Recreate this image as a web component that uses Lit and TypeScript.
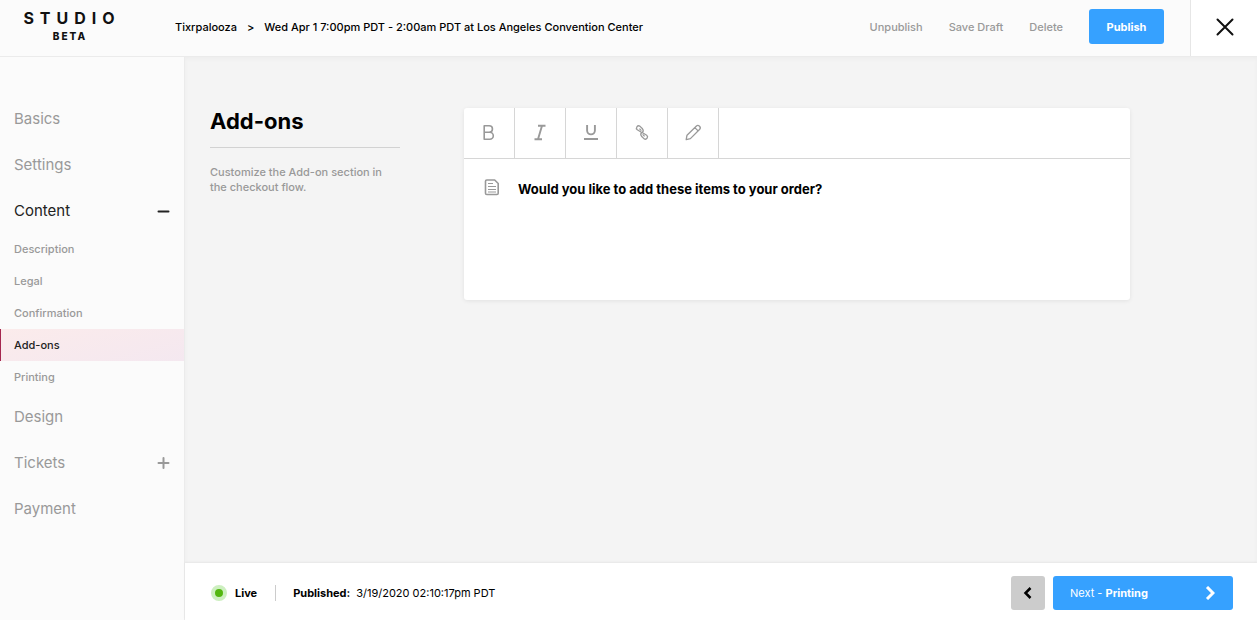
import { LitElement, html, css, svg } from "lit";
import { customElement, property, state } from "lit/decorators.js";
import { classMap } from "lit/directives/class-map.js";

const icons: Record<string, unknown> = {
  bold: svg`<path d="M7.200 4.800h5a3.200 3.200 0 0 1 0 6.500h-5zM7.200 11.300h5.600a3.500 3.500 0 0 1 0 7h-5.600z" stroke-width="1.600"/>`,
  italic: svg`<path d="M10 4.800h7.500M6.500 18.200h7.500M14 4.800l-4 13.400" stroke-width="1.900"/>`,
  underline: svg`<path d="M8.100 4v5.500a3.900 3.900 0 0 0 7.800 0V4" stroke-width="1.900"/><path d="M5 18h14" stroke-width="2"/>`,
  link: svg`<path d="M12.200 11.700L7.300 8.700a2.200 2.200 0 0 1 2.500-3.600l2.700 2.700q1.600 2-.3 3.900M9.400 7.600l2 2M11.800 11.300l4.900 3a2.200 2.200 0 0 1-2.500 3.600l-2.700-2.700q-1.600-2 .3-3.900M14.600 15.400l-2-2" stroke-width="1.300"/>`,
  pencil: svg`<path d="M5.200 18.600l.8-4.400L15.200 5.200a2.300 2.300 0 0 1 3.300 3.300L9.400 17.600zM13.800 6.600l3.300 3.300" stroke-width="1.300"/>`,
};

@customElement("studio-header")
class StudioHeader extends LitElement {
  static styles = css`
    :host {
      display: flex;
      height: 56px;
      background: #fbfbfb;
      border-bottom: 1px solid #ebebeb;
    }
    .brand {
      width: 140px;
      display: flex;
      flex-direction: column;
      align-items: center;
      padding-top: 9px;
      box-sizing: border-box;
      color: #111;
      text-decoration: none;
      font-weight: 700;
    }
    .name {
      padding-left: 4px;
      font-size: 16px;
      line-height: 18px;
      letter-spacing: 6px;
    }
    .tag {
      font-size: 10px;
      line-height: 18px;
      font-weight: 800;
      letter-spacing: 2px;
    }
    .crumbs {
      flex: 1;
      display: flex;
      align-items: center;
      gap: 10px;
      padding: 0 0 2px 35px;
      font-size: 11px;
      line-height: 16px;
      white-space: nowrap;
    }
    .crumbs a {
      color: #000;
      text-decoration: none;
    }
    .actions {
      display: flex;
      align-items: center;
      gap: 26px;
      padding: 0 26px 3px;
    }
    button {
      font: inherit;
      font-size: 11px;
      line-height: 16px;
      border: 0;
      padding: 0;
      background: none;
      color: #999;
      cursor: pointer;
    }
    .publish {
      width: 75px;
      height: 35px;
      border-radius: 3px;
      background: #36a1ff;
      color: #fff;
      font-weight: 700;
    }
    .close {
      width: 67px;
      display: grid;
      place-items: center;
      padding: 0 0 2px 2px;
      box-sizing: border-box;
      background: #fff;
      border-left: 1px solid #e6e6e6;
      color: #111;
    }
  `;
  render() {
    return html`
      <a class="brand" href="#"><span class="name">STUDIO</span><span class="tag">BETA</span></a>
      <nav class="crumbs" aria-label="Breadcrumb">
        <a href="#">Tixrpalooza</a><span>&gt;</span>
        <a href="#">Wed Apr 1 7:00pm PDT - 2:00am PDT at Los Angeles Convention Center</a>
      </nav>
      <div class="actions">
        <button>Unpublish</button>
        <button>Save Draft</button>
        <button>Delete</button>
        <button class="publish">Publish</button>
      </div>
      <button class="close" aria-label="Close">
        <svg width="18" height="18" viewBox="0 0 18 18" fill="none" stroke="currentColor" stroke-width="2" stroke-linecap="round">
          <path d="M1.500 1.500l15 15M16.500 1.500l-15 15" />
        </svg>
      </button>
    `;
  }
}

@customElement("studio-nav")
class StudioNav extends LitElement {
  @state() private open = "Content";
  @property() current = "Add-ons";
  static styles = css`
    :host {
      display: block;
      padding-top: 38px;
      background: #fbfbfb;
      border-right: 1px solid #ebebeb;
    }
    .item {
      width: 100%;
      height: 46px;
      display: flex;
      align-items: center;
      justify-content: space-between;
      padding: 0 14px;
      box-sizing: border-box;
      border: 0;
      background: none;
      font: inherit;
      font-size: 15px;
      font-weight: 400;
      color: #999;
      cursor: pointer;
    }
    .item.open {
      color: #222;
    }
    .sub {
      height: 32px;
      display: flex;
      align-items: center;
      padding-left: 14px;
      font-size: 11px;
      color: #999;
      text-decoration: none;
    }
    .sub.current {
      padding-left: 13px;
      border-left: 1px solid #a5274f;
      background: linear-gradient(165deg, #fbebeb, #f4e8f0);
      color: #222;
    }
  `;
  private toggle(name: string) {
    this.open = this.open === name ? "" : name;
  }
  render() {
    const items: [string, string[] | null][] = [
      ["Basics", null],
      ["Settings", null],
      ["Content", ["Description", "Legal", "Confirmation", "Add-ons", "Printing"]],
      ["Design", null],
      ["Tickets", []],
      ["Payment", null],
    ];
    return items.map(([name, subs]) => {
      const open = this.open === name;
      return html`
        <button class=${classMap({ item: true, open })} @click=${() => this.toggle(name)}>
          ${name}
          ${subs
            ? html`<svg width="13" height="13" viewBox="0 0 13 13" stroke="currentColor" stroke-width="2" stroke-linecap="round">
                <path d=${open ? "M1.500 7.500h10" : "M1.500 7h10M6.500 2v10"} />
              </svg>`
            : null}
        </button>
        ${open && subs
          ? subs.map((s) => html`<a href="#" class=${classMap({ sub: true, current: s === this.current })}>${s}</a>`)
          : null}
      `;
    });
  }
}

@customElement("text-editor")
class TextEditor extends LitElement {
  static styles = css`
    :host {
      display: block;
      background: #fff;
      border-radius: 3px;
      box-shadow: 0 1px 4px rgba(0, 0, 0, 0.08);
    }
    .toolbar {
      display: flex;
      border-bottom: 1px solid #d6d6d6;
    }
    .tool {
      width: 51px;
      height: 50px;
      display: grid;
      place-items: center;
      padding: 0;
      border: 0;
      border-right: 1px solid #d6d6d6;
      background: none;
      color: #999;
      cursor: pointer;
    }
    .body {
      display: flex;
      gap: 18px;
      padding: 20px;
      color: #999;
    }
    .body svg {
      flex: none;
    }
    .text {
      flex: 1;
      min-width: 0;
      height: 101px;
      padding: 0;
      border: 0;
      outline: 0;
      resize: none;
      background: none;
      color: #000;
      font: inherit;
      font-size: 13px;
      line-height: 20px;
      font-weight: 700;
    }
  `;
  render() {
    return html`
      <div class="toolbar" role="toolbar" aria-label="Formatting">
        ${Object.entries(icons).map(
          ([name, shape]) => html`<button class="tool" aria-label=${name}>
            <svg width="24" height="24" viewBox="0 0 24 24" fill="none" stroke="currentColor" stroke-linejoin="round">${shape}</svg>
          </button>`
        )}
      </div>
      <label class="body">
        <svg width="16" height="17" viewBox="0 0 16 17" fill="none" stroke="currentColor" stroke-linejoin="round">
          <path d="M2.800 1h7.900l3.500 3.500v9.700q0 1.300-1.300 1.300h-10.100q-1.300 0-1.300-1.300v-11.900q0-1.300 1.300-1.300z" stroke-width="1.600" />
          <path d="M4 4.500h5M4 7.500h8M4 10.500h8M4 13h8" stroke-width="1" />
        </svg>
        <textarea class="text" aria-label="Add-ons message" spellcheck="false" .value=${"Would you like to add these items to your order?"}></textarea>
      </label>
    `;
  }
}

@customElement("studio-footer")
class StudioFooter extends LitElement {
  static styles = css`
    :host {
      display: flex;
      align-items: center;
      height: 57px;
      padding: 2px 24px 0 26px;
      box-sizing: border-box;
      background: #fff;
      box-shadow: 0 -1px 2px rgba(0, 0, 0, 0.06);
      font-size: 11px;
      line-height: 16px;
      font-weight: 400;
    }
    strong {
      font-weight: 700;
    }
    .status {
      display: flex;
      align-items: center;
      flex: 1;
      white-space: nowrap;
    }
    .dot {
      width: 8px;
      height: 8px;
      border: 4px solid #cdefc0;
      border-radius: 50%;
      background: #53b70f;
      margin-right: 8px;
    }
    .live {
      padding-right: 18px;
      margin-right: 17px;
      border-right: 1px solid #ccc;
    }
    .label {
      margin-right: 6px;
    }
    button {
      height: 34px;
      border: 0;
      border-radius: 3px;
      font: inherit;
      cursor: pointer;
      display: flex;
      align-items: center;
    }
    .back {
      width: 34px;
      padding: 0;
      margin-right: 8px;
      justify-content: center;
      background: #ccc;
      color: #000;
    }
    .next {
      width: 180px;
      padding: 0 18px 0 17px;
      justify-content: space-between;
      background: #36a1ff;
      color: #fff;
    }
  `;
  render() {
    return html`
      <div class="status">
        <span class="dot"></span><strong class="live">Live</strong>
        <strong class="label">Published:</strong><time>3/19/2020 02:10:17pm PDT</time>
      </div>
      <button class="back" aria-label="Back">
        <svg width="10" height="14" viewBox="0 0 10 14" fill="none" stroke="currentColor" stroke-width="2.500"><path d="M7.500 2l-5 5 5 5" /></svg>
      </button>
      <button class="next">
        <span>Next - <strong>Printing</strong></span>
        <svg width="10" height="14" viewBox="0 0 10 14" fill="none" stroke="currentColor" stroke-width="3"><path d="M2 1l6 6-6 6" /></svg>
      </button>
    `;
  }
}

@customElement("app-root")
class AppRoot extends LitElement {
  static styles = css`
    :host {
      display: flex;
      flex-direction: column;
      min-height: 100vh;
      font-family: Inter, "Liberation Sans", sans-serif;
      font-size: 11px;
      font-weight: 500;
      color: #000;
      background: #f4f4f4;
    }
    .shell {
      flex: 1;
      display: grid;
      grid-template-columns: 185px minmax(0, 1fr);
    }
    .main {
      display: flex;
      flex-direction: column;
      box-shadow: inset 0 2px 4px rgba(0, 0, 0, 0.03);
    }
    .content {
      flex: 1;
      display: grid;
      grid-template-columns: 190px minmax(0, 1fr);
      column-gap: 64px;
      align-items: start;
      padding: 51px 127px 51px 25px;
    }
    .title {
      margin: 0;
      padding-bottom: 12px;
      border-bottom: 1px solid #d2d2d2;
      font-size: 22px;
      line-height: 27px;
      font-weight: 700;
    }
    .hint {
      margin: 17px 0 0;
      font-size: 11px;
      line-height: 15px;
      color: #999;
    }
  `;
  render() {
    return html`
      <studio-header></studio-header>
      <div class="shell">
        <studio-nav></studio-nav>
        <div class="main">
          <main class="content">
            <section>
              <h1 class="title">Add-ons</h1>
              <p class="hint">Customize the Add-on section in the checkout flow.</p>
            </section>
            <text-editor></text-editor>
          </main>
          <studio-footer></studio-footer>
        </div>
      </div>
    `;
  }
}
